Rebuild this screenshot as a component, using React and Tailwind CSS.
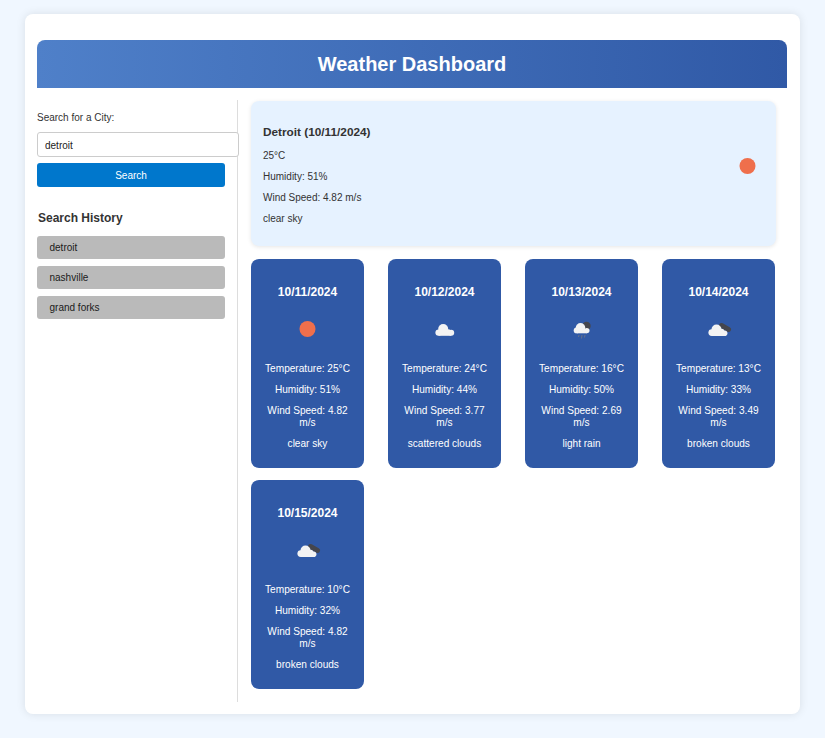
import React from 'react';

const forecast = [
  { date: '10/11/2024', icon: 'sun', temp: '25', humidity: '51', wind: '4.82', desc: 'clear sky' },
  { date: '10/12/2024', icon: 'cloud', temp: '24', humidity: '44', wind: '3.77', desc: 'scattered clouds' },
  { date: '10/13/2024', icon: 'rain', temp: '16', humidity: '50', wind: '2.69', desc: 'light rain' },
  { date: '10/14/2024', icon: 'broken', temp: '13', humidity: '33', wind: '3.49', desc: 'broken clouds' },
  { date: '10/15/2024', icon: 'broken', temp: '10', humidity: '32', wind: '4.82', desc: 'broken clouds' },
];

const history = ['detroit', 'nashville', 'grand forks'];

const WeatherIcon = ({ type }) => {
  if (type === 'sun') {
    return (
      <svg width="40" height="40" viewBox="0 0 40 40">
        <circle cx="19.5" cy="20" r="8" fill="#ef6f4c" />
      </svg>
    );
  }
  if (type === 'cloud') {
    return (
      <svg width="40" height="40" viewBox="0 0 40 40">
        <g fill="#f3f3f3">
          <circle cx="18.2" cy="20" r="5" />
          <circle cx="13.6" cy="23.6" r="3.2" />
          <circle cx="26.2" cy="23.8" r="3" />
          <circle cx="23.4" cy="22.8" r="2.5" />
          <rect x="13.6" y="22" width="12.6" height="4.8" />
        </g>
      </svg>
    );
  }
  if (type === 'rain') {
    return (
      <svg width="40" height="40" viewBox="0 0 40 40">
        <circle cx="24.5" cy="17" r="4.2" fill="#45464d" />
        <g fill="#f3f3f3">
          <circle cx="18.5" cy="18.8" r="4.8" />
          <circle cx="14.6" cy="21.4" r="2.9" />
          <circle cx="24.8" cy="21.6" r="2.7" />
          <rect x="14.6" y="20" width="10.2" height="4.3" />
        </g>
        <path d="M17 26l-.5 2M20 26l-.5 3.5M23 26l-.5 2.5" stroke="#66718a" strokeWidth="1" fill="none" />
      </svg>
    );
  }
  return (
    <svg width="40" height="40" viewBox="0 0 40 40">
      <path d="M22.5 16.5L29.5 20.5" stroke="#45464d" strokeWidth="5" strokeLinecap="round" fill="none" />
      <g fill="#f3f3f3">
        <circle cx="17.5" cy="20.5" r="5" />
        <circle cx="12.8" cy="23.6" r="3.4" />
        <circle cx="25.6" cy="24.2" r="2.8" />
        <circle cx="22.6" cy="22.6" r="2.8" />
        <rect x="12.8" y="22" width="12.8" height="5" />
      </g>
    </svg>
  );
};

const ForecastCard = ({ day }) => (
  <div className="flex h-[209px] flex-col items-center rounded-lg bg-[#3059a6] px-3 pt-[26px] text-center text-[10.1px] leading-[12px] text-white">
    <h4 className="text-[12px] font-bold leading-[14px]">{day.date}</h4>
    <div className="mt-[10px] mb-[14px]">
      <WeatherIcon type={day.icon} />
    </div>
    <p>Temperature: {day.temp}°C</p>
    <p className="mt-[9px]">Humidity: {day.humidity}%</p>
    <p className="mt-[9px]">Wind Speed: {day.wind} m/s</p>
    <p className="mt-[9px]">{day.desc}</p>
  </div>
);

export default function App() {
  return (
    <div className="min-h-[738px] bg-[#f0f7ff] px-[25px] pt-[14px] font-['Liberation_Sans',Arial,sans-serif]">
      <div className="h-[700px] rounded-lg bg-white px-3 pt-[26px] shadow-[0_0_10px_rgba(0,0,0,0.1)]">
        <header className="flex h-[48px] w-[750px] items-center justify-center rounded-t-lg bg-gradient-to-r from-[#4f80c9] to-[#3059a6] text-white">
          <h1 className="text-[20px] font-bold">Weather Dashboard</h1>
        </header>

        <div className="mt-3 flex h-[602px]">
          <aside className="w-[201px] shrink-0 border-r border-[#dddddd] pt-[12px] text-[#333333]">
            <label className="block text-[10px] leading-[12px]">Search for a City:</label>
            <input
              readOnly
              value="detroit"
              className="mt-[8px] block h-[25px] w-[202px] rounded-[3px] border border-[#cccccc] bg-white px-[7px] pt-[2px] text-[10px] text-[#222222]"
            />
            <button className="mt-[6px] block h-[24px] w-[188px] rounded-[3px] bg-[#0077cc] text-[10px] text-white">
              Search
            </button>
            <h3 className="mt-[24px] pl-px text-[12px] font-bold leading-[14px]">Search History</h3>
            <div className="mt-[11px] flex w-[188px] flex-col gap-[7px]">
              {history.map((city) => (
                <div key={city} className="flex h-[23px] items-center rounded-[3px] bg-[#bababa] pl-[12.5px] text-[10px] text-[#1a1a1a]">
                  {city}
                </div>
              ))}
            </div>
          </aside>

          <main className="ml-[13px] mt-px flex w-[525px] flex-col gap-[13px]">
            <section className="flex h-[145px] items-center justify-between rounded-lg bg-[#e6f2ff] pl-3 pr-[8px] shadow-[0_1px_4px_rgba(0,0,0,0.1)]">
              <div className="pt-[2px] text-[10px] leading-[12px] text-[#333333]">
                <h2 className="text-[11.8px] font-bold leading-[14px]">Detroit (10/11/2024)</h2>
                <p className="mt-[11px]">25°C</p>
                <p className="mt-[9px]">Humidity: 51%</p>
                <p className="mt-[9px]">Wind Speed: 4.82 m/s</p>
                <p className="mt-[9px]">clear sky</p>
              </div>
              <div className="-mt-4">
                <WeatherIcon type="sun" />
              </div>
            </section>

            <div className="grid grid-cols-[113px_113px_113px_113px] gap-x-[24px] gap-y-[12px]">
              {forecast.map((day) => (
                <ForecastCard key={day.date} day={day} />
              ))}
            </div>
          </main>
        </div>
      </div>
    </div>
  );
}
